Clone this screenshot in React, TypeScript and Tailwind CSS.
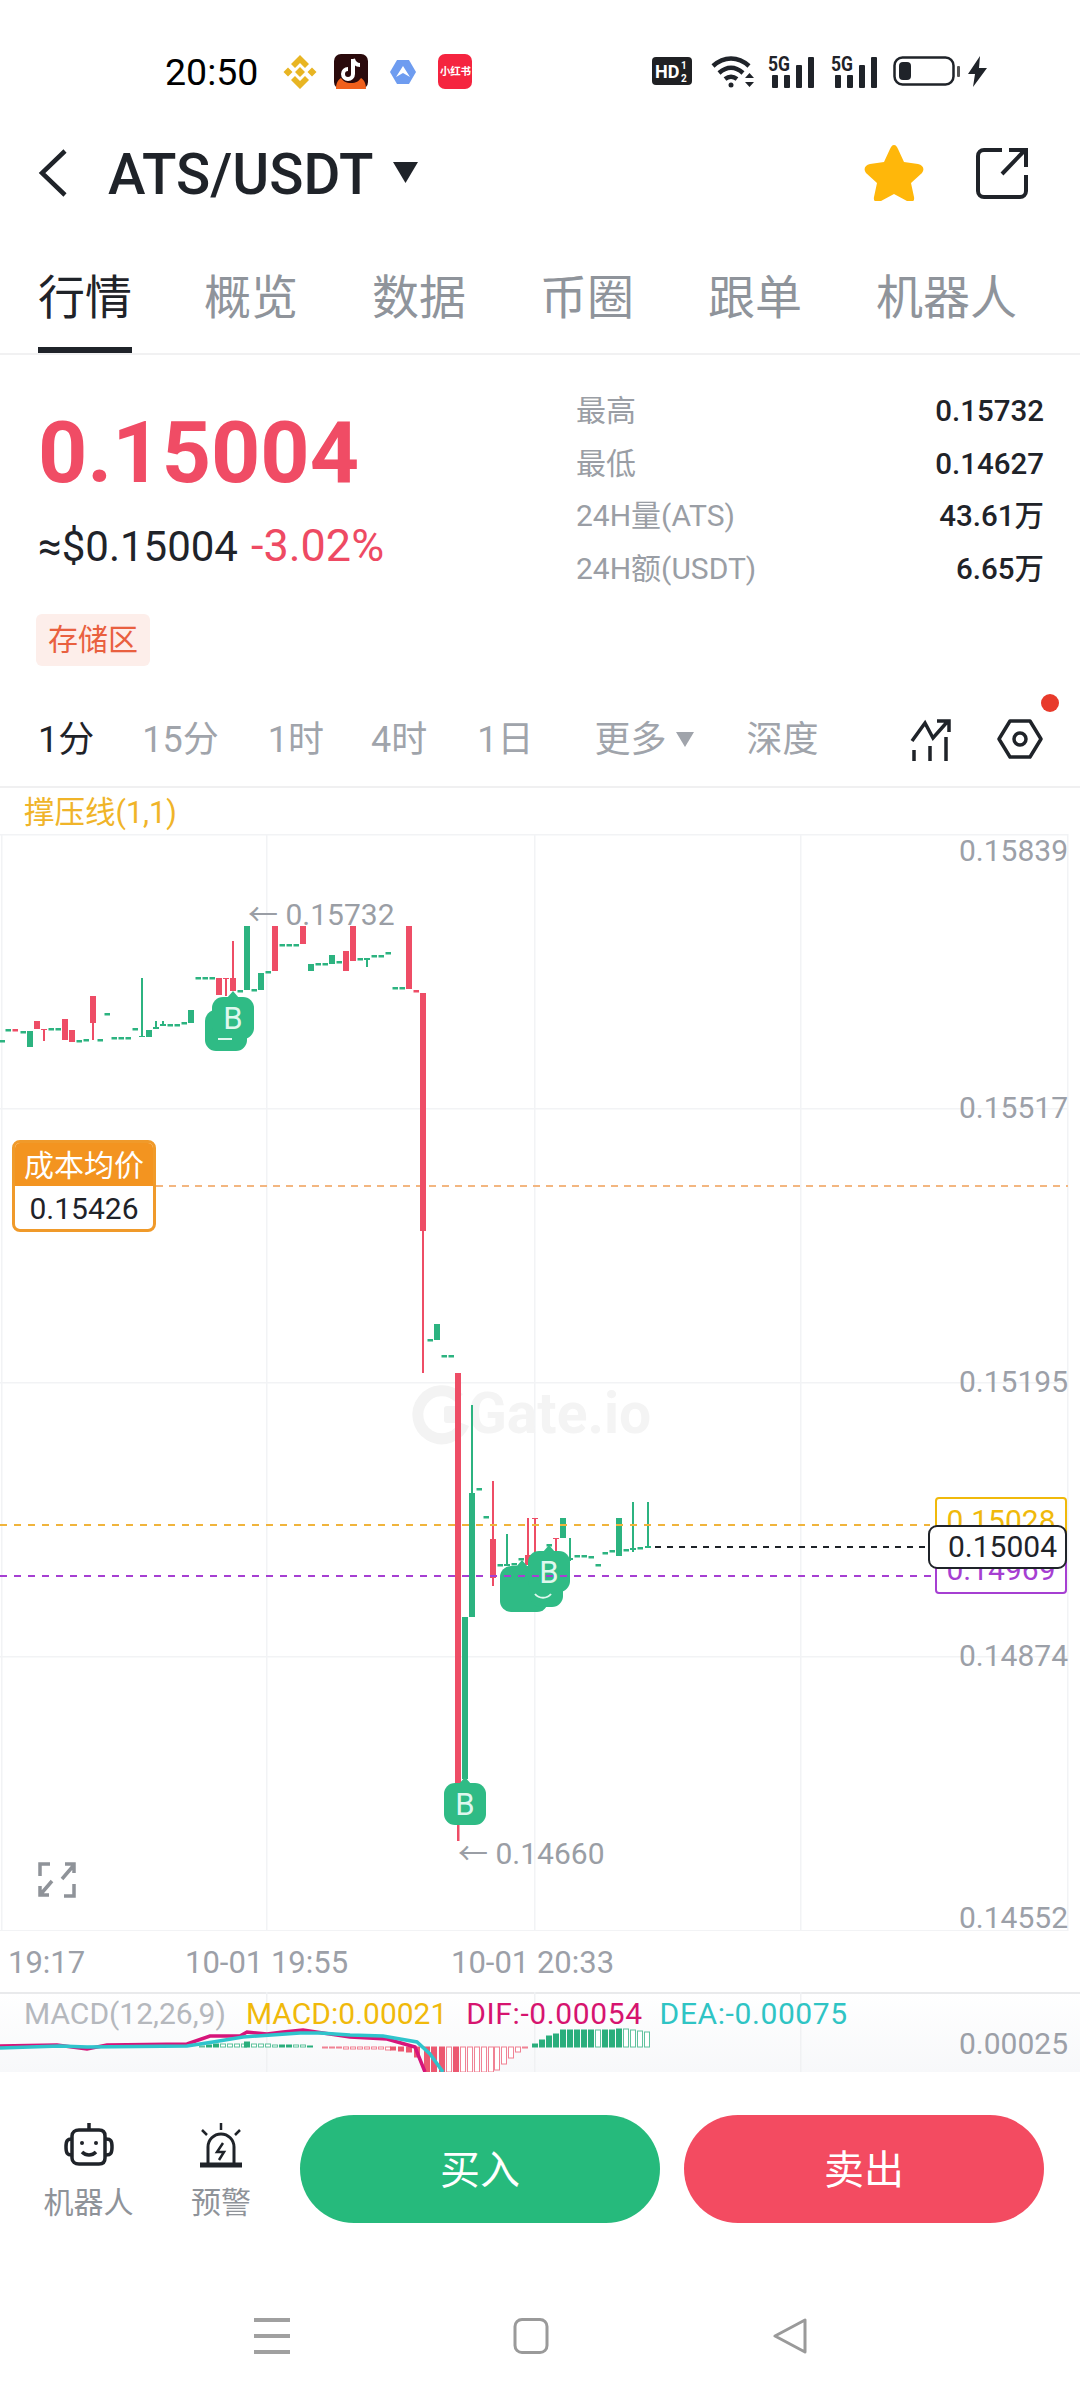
import React from 'react';

const GREEN = '#2cb380';
const RED = '#ee4d66';

// x, wickTop, wickBottom, bodyTop, bodyBottom, colour (page pixels)
type Candle = [number, number, number, number, number, string];
const candles: Candle[] = [
  [30, 1032, 1048, 1032, 1048, GREEN],
  [37, 1022, 1030, 1022, 1030, RED],
  [44, 1030, 1042, 1030, 1031, RED],
  [65, 1020, 1041, 1020, 1041, RED],
  [72, 1031, 1043, 1031, 1043, RED],
  [93, 997, 1041, 997, 1024, RED],
  [142, 979, 1038, 1037, 1038, GREEN],
  [149, 1031, 1038, 1031, 1038, GREEN],
  [156, 1022, 1028, 1028, 1030, GREEN],
  [163, 1022, 1026, 1025, 1027, GREEN],
  [191, 1011, 1024, 1011, 1024, GREEN],
  [219, 979, 996, 979, 996, RED],
  [226, 979, 997, 979, 980, RED],
  [233, 942, 992, 979, 992, RED],
  [247, 927, 990, 927, 991, GREEN],
  [261, 974, 991, 974, 991, GREEN],
  [275, 927, 972, 927, 972, RED],
  [303, 927, 945, 927, 945, RED],
  [311, 965, 972, 965, 972, GREEN],
  [332, 956, 965, 956, 965, GREEN],
  [346, 952, 972, 952, 972, RED],
  [353, 927, 962, 927, 962, RED],
  [367, 959, 968, 959, 961, GREEN],
  [409, 927, 990, 927, 990, RED],
  [423, 994, 1374, 994, 1232, RED],
  [437, 1325, 1341, 1325, 1341, GREEN],
  [458, 1374, 1842, 1374, 1800, RED],
  [465, 1618, 1780, 1618, 1780, GREEN],
  [472, 1406, 1618, 1494, 1618, GREEN],
  [493, 1482, 1587, 1540, 1579, RED],
  [507, 1535, 1566, 1565, 1567, GREEN],
  [528, 1519, 1566, 1556, 1566, RED],
  [535, 1519, 1555, 1519, 1520, RED],
  [556, 1539, 1560, 1539, 1540, RED],
  [563, 1519, 1539, 1519, 1539, GREEN],
  [570, 1539, 1562, 1559, 1561, GREEN],
  [619, 1519, 1557, 1519, 1557, GREEN],
  [633, 1503, 1553, 1549, 1551, GREEN],
  [648, 1503, 1549, 1547, 1549, GREEN],
];

// x, y, colour for flat candles
const dashes: [number, number, string][] = [
  [2, 1042, GREEN], [8, 1031, GREEN], [15, 1031, RED], [23, 1033, GREEN],
  [51, 1030, GREEN], [58, 1030, GREEN], [79, 1042, GREEN], [86, 1041, GREEN],
  [100, 1041, GREEN], [107, 1015, GREEN], [114, 1039, GREEN], [121, 1039, GREEN], [128, 1039, GREEN],
  [135, 1030, GREEN], [170, 1026, GREEN], [177, 1026, GREEN], [184, 1024, GREEN],
  [198, 979, GREEN], [205, 979, GREEN], [212, 979, GREEN], [240, 992, GREEN], [254, 991, GREEN], [268, 973, GREEN],
  [282, 946, GREEN], [289, 946, GREEN], [296, 946, GREEN], [318, 965, GREEN], [325, 965, GREEN],
  [339, 963, GREEN], [360, 960, GREEN], [374, 957, GREEN], [381, 957, GREEN], [388, 954, GREEN],
  [395, 989, GREEN], [402, 989, GREEN], [416, 992, RED], [430, 1341, GREEN], [444, 1357, GREEN], [451, 1357, GREEN],
  [479, 1490, GREEN], [486, 1518, GREEN], [500, 1566, GREEN], [514, 1565, GREEN], [521, 1560, GREEN], [549, 1546, GREEN],
  [577, 1557, GREEN], [584, 1557, GREEN], [591, 1558, GREEN], [598, 1566, GREEN], [605, 1554, GREEN], [612, 1552, GREEN],
  [626, 1551, GREEN], [640, 1549, GREEN],
];

function Marker({ x, y, w, h, tip, label }: { x: number; y: number; w: number; h: number; tip?: number; label?: boolean }) {
  return (
    <g>
      <rect x={x} y={y} width={w} height={h} rx={11} fill="#2fbb85" />
      {tip !== undefined && <path d={`M${tip - 6} ${y + 1}L${tip} ${y - 6}L${tip + 6} ${y + 1}Z`} fill="#2fbb85" />}
      {label && (
        <text x={x + w / 2} y={y + h / 2 + 11} textAnchor="middle" fontSize={31} fill="#dff7ee" fontFamily="Roboto">
          B
        </text>
      )}
    </g>
  );
}

function StatusIcons() {
  return (
    <div className="flex items-center">
      <svg className="ml-[25px]" width="34" height="34" viewBox="0 0 34 34" fill="#e8b523">
        <path d="M17 0l9 9-4 4-5-5-5 5-4-4zM17 34l9-9-4-4-5 5-5-5-4 4zM5 12.500l4.500 4.500L5 21.500.5 17zM29 12.500l4.500 4.500-4.500 4.500-4.500-4.500zM17 12l5 5-5 5-5-5z" />
      </svg>
      <svg className="ml-[17px]" width="34" height="35" viewBox="0 0 34 35">
        <rect width="34" height="35" rx="7" fill="#2a0a0c" />
        <path d="M2 35c0-6 2-9 5-11 2 3 5 5 10 5s8-2 10-5c3 2 5 5 5 11z" fill="#f0601c" />
        <path d="M19 5v15a5 5 0 1 1-5-5M19 5c1 4 4 6 7 6" fill="none" stroke="#fff" strokeWidth="4" />
      </svg>
      <svg className="ml-[22px]" width="26" height="24" viewBox="0 0 26 24">
        <path d="M7 0h12l7 12-7 12H7L0 12z" fill="#6e9cf0" />
        <path d="M13 6l7 11-7-4-7 4z" fill="#fff" />
      </svg>
      <div className="ml-[22px] w-[34px] h-[35px] rounded-[7px] bg-[#f5243f] text-white text-[10.500px] font-bold leading-[35px] text-center tracking-[-0.3px]">
        小红书
      </div>
    </div>
  );
}

function SignalIcon({ className }: { className?: string }) {
  return (
    <svg className={className} width="46" height="33" viewBox="0 0 46 33" fill="#1f2329" overflow="visible">
      <text x="0" y="16" fontSize="21" fontWeight="700" fontFamily="Roboto" textLength="22" lengthAdjust="spacingAndGlyphs">5G</text>
      <rect x="4" y="20" width="6" height="13" rx="1" />
      <rect x="16" y="20" width="6" height="13" rx="1" />
      <rect x="28" y="10" width="6" height="23" rx="1" />
      <rect x="40" y="2" width="6" height="31" rx="1" />
    </svg>
  );
}

function StatusRight() {
  return (
    <div className="flex items-center">
      <svg width="40" height="28" viewBox="0 0 40 28">
        <rect width="40" height="28" rx="4" fill="#1f2023" />
        <text x="3" y="21" fontSize="18" fontWeight="700" fill="#fff" fontFamily="Roboto">HD</text>
        <text x="29" y="12" fontSize="10" fontWeight="700" fill="#fff" fontFamily="Roboto">1</text>
        <text x="29" y="25" fontSize="10" fontWeight="700" fill="#fff" fontFamily="Roboto">2</text>
      </svg>
      <svg className="ml-[19px]" width="44" height="34" viewBox="0 0 44 34" fill="none" stroke="#1f2329" strokeWidth="4.500">
        <path d="M2 12c11-10 25-10 36 0M8 19c8-7 16-7 24 0M14 25c4-3 8-3 12 0" />
        <circle cx="20" cy="31" r="2.500" fill="#1f2329" stroke="none" />
        <path d="M34 24l4.500-5 4.500 5zM34 28h9l-4.500 5z" fill="#1f2329" stroke="none" />
      </svg>
      <SignalIcon className="ml-[13px]" />
      <SignalIcon className="ml-[17px]" />
      <svg className="ml-[16px]" width="67" height="30" viewBox="0 0 67 30">
        <rect x="1.500" y="1.500" width="59" height="27" rx="8" fill="none" stroke="#1f2329" strokeWidth="2.500" />
        <rect x="6" y="6" width="12" height="18" rx="4" fill="#1f2329" />
        <rect x="64" y="10" width="3" height="11" rx="1" fill="#555" />
      </svg>
      <svg className="ml-[8px]" width="19" height="31" viewBox="0 0 19 31" fill="#1f2329">
        <path d="M12 0L0 18h7l-2 13L19 12h-8z" />
      </svg>
    </div>
  );
}

function Stat({ label, value }: { label: string; value: string }) {
  return (
    <div className="flex justify-between items-center h-[52.500px]">
      <span className="text-[30px] text-[#9a9ea5]">{label}</span>
      <span className="text-[29.500px] font-medium text-[#1f2329]">{value}</span>
    </div>
  );
}

function PriceAxisLabel({ y, text }: { y: number; text: string }) {
  return (
    <span className="absolute right-[12px] text-[30px] leading-[34px] text-[#9ca0a8]" style={{ top: y - 835 - 17 }}>
      {text}
    </span>
  );
}

function PriceChart() {
  return (
    <div className="relative h-[1097px]">
      <svg className="absolute inset-0" width="1080" height="1097" viewBox="0 835 1080 1097">
        {[835, 1109, 1383, 1657, 1931].map((y) => (
          <rect key={y} x="0" y={y} width="1068" height="1.500" fill="#f2f3f5" />
        ))}
        {[1, 266, 534, 800, 1067].map((x) => (
          <rect key={x} x={x} y="835" width="1.500" height="1097" fill="#f2f3f5" />
        ))}
        {/* watermark */}
        <path d="M459 1399A24 24 0 1 0 464 1425" fill="none" stroke="#f3f3f3" strokeWidth="11" />
        <rect x="444" y="1407" width="17" height="17" rx="3" fill="#f3f3f3" />
        <text x="468" y="1434" fontSize="57" fontWeight="700" fill="#f4f4f4" fontFamily="Roboto">Gate.io</text>

        <path d="M156 1187H1068" stroke="#f3b680" strokeWidth="2" strokeDasharray="7 6" />

        {candles.map(([x, wt, wb, bt, bb, c], i) => (
          <g key={i} fill={c}>
            <rect x={x - 1} y={wt} width="2" height={wb - wt} />
            <rect x={x - 3} y={bt} width="6" height={bb - bt} />
          </g>
        ))}
        {dashes.map(([x, y, c], i) => (
          <rect key={i} x={x - 2.5} y={y - 1} width="5.500" height="2.500" fill={c} />
        ))}

        <Marker x={205} y={1011} w={42} h={41} />
        <Marker x={212} y={998} w={42} h={42} tip={233} label />
        <rect x="218" y="1039" width="14" height="2" fill="#dff7ee" />

        <Marker x={444} y={1784} w={42} h={42} tip={465} label />
        <rect x="457.500" y="1826" width="2" height="16" fill={RED} />

        <Marker x={500} y={1567} w={48} h={46} tip={522} />
        <Marker x={530} y={1577} w={33} h={31} />
        <path d="M535 1595c4 5 12 5 16 0" fill="none" stroke="#dff7ee" strokeWidth="2" />
        <Marker x={528} y={1552} w={42} h={41} tip={549} label />

        <path d="M0 1526H930" stroke="#f0b43c" strokeWidth="2" strokeDasharray="7 7" />
        <path d="M0 1577H936" stroke="#a63fd2" strokeWidth="2" strokeDasharray="7 7" />
        <path d="M655 1548H928" stroke="#1f2329" strokeWidth="2" strokeDasharray="6 6" />

        {/* fullscreen icon */}
        <path
          d="M40 1877v-12h10M74 1885v12h-10M62 1880L74 1866M65 1865h9v9M52 1882L40 1896M40 1887v9h9"
          fill="none"
          stroke="#8f9399"
          strokeWidth="3.500"
        />
      </svg>

      <PriceAxisLabel y={852} text="0.15839" />
      <PriceAxisLabel y={1109} text="0.15517" />
      <PriceAxisLabel y={1383} text="0.15195" />
      <PriceAxisLabel y={1657} text="0.14874" />
      <PriceAxisLabel y={1919} text="0.14552" />

      <span className="absolute left-[248px] top-[64px] text-[30px] leading-[34px] text-[#9a9ea5]">← 0.15732</span>
      <span className="absolute left-[458px] top-[1003px] text-[30px] leading-[34px] text-[#9a9ea5]">← 0.14660</span>

      <div className="absolute left-[12px] top-[306px] w-[144px] h-[92px] rounded-[8px] border-[3px] border-[#f09a2a] bg-white overflow-hidden text-center">
        <div className="h-[43px] bg-[#f39420] text-white text-[30px] leading-[45px]">成本均价</div>
        <div className="text-[#1f2329] text-[30px] leading-[45px]">0.15426</div>
      </div>

      <div className="absolute left-[935px] top-[663px] w-[132px] h-[42px] rounded-[4px] border-2 border-[#f0b90b] bg-white text-center text-[30px] leading-[44px] text-[#f0b90b]">
        0.15028
      </div>
      <div className="absolute left-[935px] top-[720px] w-[132px] h-[40px] rounded-[4px] border-2 border-[#a63fd2] bg-white text-center text-[30px] leading-[28px] text-[#a63fd2]">
        0.14969
      </div>
      <div className="absolute left-[928px] top-[691px] w-[139px] h-[44px] rounded-[9px] border-2 border-[#1f2329] bg-white text-right pr-[8px] text-[30px] leading-[40px] text-[#1f2329]">
        0.15004
      </div>
    </div>
  );
}

// histogram bars: x, depth from baseline (+ is up), hollow or filled
const macdBars: [number, number, boolean][] = [
  [202, 1, false], [209, 2, true], [216, 3, true], [223, 3, false], [230, 3, false], [237, 3, false], [244, 3, false],
  [247, 5, true], [254, 3, false], [261, 3, false], [268, 3, false], [275, 2, false], [282, 2, true], [289, 2, true],
  [296, 2, false], [303, 2, false], [310, 1, true],
  [325, -1, false], [332, -1, false], [339, -1, false], [346, -2, false], [353, -2, false], [360, -2, false],
  [367, -2, false], [374, -2, false], [381, -2, false], [388, -3, false], [393, -3, true], [401, -4, true],
  [409, -5, true], [417, -10, true], [427, -25, true], [434, -25, true], [442, -25, true], [449, -25, false],
  [456, -25, true], [463, -25, false], [470, -25, false], [477, -25, false], [484, -25, false], [491, -25, false],
  [497, -23, false], [504, -17, false], [511, -11, false], [518, -5, false], [525, -1, false],
  [535, 3, true], [542, 7, true], [549, 11, true], [556, 13, true], [563, 17, true], [570, 17, true], [577, 17, true],
  [584, 17, true], [591, 17, true], [598, 17, false], [605, 17, true], [612, 17, true], [619, 18, true],
  [626, 18, false], [633, 17, false], [640, 16, false], [647, 15, false],
];

function MacdChart() {
  return (
    <div className="relative h-[80px] bg-gradient-to-b from-white to-[#f7f8fa] overflow-hidden">
      <svg className="absolute inset-0" width="1080" height="80" viewBox="0 1993 1080 80">
        <rect x="0" y="1993" width="1080" height="2" fill="#e9eaec" />
        {[266, 534, 800].map((x) => (
          <rect key={x} x={x} y="1993" width="1.500" height="80" fill="#f0f1f3" />
        ))}
        {macdBars.map(([x, d, filled], i) => {
          const c = d > 0 ? '#2aae7c' : '#ec5870';
          const y = d > 0 ? 2048 - d : 2048;
          return (
            <rect
              key={i}
              x={x - 2.5}
              y={y}
              width="5"
              height={Math.abs(d)}
              fill={filled ? c : 'white'}
              stroke={c}
              strokeOpacity={filled ? 1 : 0.75}
              strokeWidth="1"
            />
          );
        })}
        <polyline
          fill="none"
          stroke="#d6147a"
          strokeWidth="3.500"
          points="0,2047 57,2046 87,2050 107,2046 187,2045 210,2037 240,2037 247,2033 267,2035 283,2033 303,2031 350,2038 387,2040 415,2048 425,2073"
        />
        <polyline
          fill="none"
          stroke="#2fc4cc"
          strokeWidth="3.500"
          points="0,2049 60,2047 87,2048 187,2047 213,2043 243,2038 300,2034 320,2034 350,2036 383,2037 417,2043 430,2055 443,2073"
        />
      </svg>
      <div className="absolute left-[24px] top-[5px] flex text-[30px] leading-[34px]">
        <span className="text-[#b5b8bd]">MACD(12,26,9)</span>
        <span className="ml-[20px] text-[#f0b90b]">MACD:0.00021</span>
        <span className="ml-[19px] text-[#d6146f] tracking-[0.6px]">DIF:-0.00054</span>
        <span className="ml-[17px] text-[#2fc4c4] tracking-[0.6px]">DEA:-0.00075</span>
      </div>
      <span className="absolute right-[12px] top-[35px] text-[30px] leading-[34px] text-[#9ca0a8]">0.00025</span>
    </div>
  );
}

export default function App() {
  const tabs = ['概览', '数据', '币圈', '跟单', '机器人'];
  const intervals = [
    { t: '15分', ml: 'ml-[48px]' },
    { t: '1时', ml: 'ml-[49px]' },
    { t: '4时', ml: 'ml-[47px]' },
    { t: '1日', ml: 'ml-[50px]' },
  ];

  return (
    <div className="w-[1080px] h-[2400px] bg-white flex flex-col font-['Roboto','Noto_Sans_CJK_SC',sans-serif] text-[#1f2329]">
      {/* status bar */}
      <div className="h-[110px] pt-[54px] pl-[165px] pr-[93px] flex items-start">
        <span className="text-[37.500px] leading-[36px] text-black">20:50</span>
        <StatusIcons />
        <div className="ml-auto">
          <StatusRight />
        </div>
      </div>

      {/* pair header */}
      <div className="h-[125px] pl-[38px] pr-[52px] flex items-center">
        <svg width="30" height="48" viewBox="0 0 30 48" fill="none" stroke="#1f2329" strokeWidth="4.500">
          <path d="M27 2L4 24l23 22" />
        </svg>
        <span className="ml-[40px] mt-[4px] text-[56.500px] leading-[60px] font-medium">ATS/USDT</span>
        <svg className="ml-[20px]" width="25" height="21" viewBox="0 0 25 21" fill="#1f2329">
          <path d="M0 0h25L12.500 21z" />
        </svg>
        <svg className="ml-auto" width="60" height="56" viewBox="0 0 60 56" fill="#ffb70a">
          <path d="M30 0c2 0 3 2 4 4l6 13 14 2c5 1 7 5 4 9L47 38l3 14c1 5-3 6-7 4l-13-7-13 7c-4 2-8 1-7-4l3-14L2 28c-3-4-1-8 4-9l14-2 6-13c1-2 2-4 4-4z" />
        </svg>
        <svg className="ml-[52px]" width="52" height="52" viewBox="0 0 52 52" fill="none" stroke="#1f2329" strokeWidth="4">
          <path d="M26 3H8a6 6 0 0 0-6 6v35a6 6 0 0 0 6 6h36a6 6 0 0 0 6-6V28" />
          <path d="M26 27L49 3M33 3h17v17" />
        </svg>
      </div>

      {/* tabs */}
      <div className="h-[120px] px-[38px] flex gap-[74px] border-b-2 border-[#f1f1f2] text-[47px] leading-[54px] text-[#8f949b]">
        <div className="relative -mr-[2px] pt-[36px] text-[#1f2329]">
          行情
          <div className="absolute left-0 right-0 bottom-0 h-[6px] bg-[#1f2329]" />
        </div>
        {tabs.map((t) => (
          <div key={t} className="pt-[36px]">
            {t}
          </div>
        ))}
      </div>

      {/* price block */}
      <div className="h-[331px] flex pl-[38px] pr-[36px] pt-[30px]">
        <div className="flex-1 mt-[18px]">
          <div className="text-[86px] leading-[100px] font-bold text-[#f04c65]">0.15004</div>
          <div className="mt-[21px] h-[44px] flex items-baseline gap-[13px] text-[42px] leading-[44px]">
            <span>≈$0.15004</span>
            <span className="text-[45px] text-[#ee4a63]">-3.02%</span>
          </div>
          <div className="mt-[46px] -ml-[2px] w-[114px] h-[52px] rounded-[6px] bg-[#fdeeea] text-[#e9603f] text-[30px] leading-[52px] text-center">
            存储区
          </div>
        </div>
        <div className="w-[468px] leading-[34px]">
          <Stat label="最高" value="0.15732" />
          <Stat label="最低" value="0.14627" />
          <Stat label="24H量(ATS)" value="43.61万" />
          <Stat label="24H额(USDT)" value="6.65万" />
        </div>
      </div>

      {/* intervals */}
      <div className="h-[102px] relative flex items-start pt-[33px] pl-[38px] pr-[37px] border-b-2 border-[#f0f0f1] text-[36px] leading-[42px] text-[#a0a4ab]">
        <span className="text-[#1f2329]">1分</span>
        {intervals.map((it) => (
          <span key={it.t} className={it.ml}>
            {it.t}
          </span>
        ))}
        <span className="ml-[61px]">更多</span>
        <svg className="ml-[10px] mt-[13px]" width="18" height="15" viewBox="0 0 18 15" fill="#a0a4ab">
          <path d="M0 0h18L9 15z" />
        </svg>
        <span className="ml-[52px]">深度</span>
        <svg className="ml-auto" width="42" height="42" viewBox="0 0 42 42" fill="none" stroke="#1f2329" strokeWidth="3.500">
          <path d="M2 22L15 4l8 15L38 2M27 2h12v11" />
          <path d="M4 31v11M20 27v15M36 18v24" />
        </svg>
        <svg className="ml-[45px]" width="46" height="40" viewBox="0 0 46 40" fill="none" stroke="#1f2329" strokeWidth="3.500">
          <path d="M13 2h20l11 18-11 18H13L2 20z" strokeLinejoin="round" />
          <circle cx="23" cy="20" r="6" />
        </svg>
        <div className="absolute right-[21px] top-[8px] w-[18px] h-[18px] rounded-full bg-[#e83a2b]" />
      </div>

      {/* indicator label */}
      <div className="h-[46px] pl-[24px] pt-[8px] text-[30.500px] leading-[34px] text-[#f0b429]">撑压线(1,1)</div>

      <PriceChart />

      {/* time axis */}
      <div className="h-[61px] relative text-[31px] leading-[64px] text-[#9ca0a8]">
        <span className="absolute left-[8px]">19:17</span>
        <span className="absolute left-[185px]">10-01 19:55</span>
        <span className="absolute left-[451px]">10-01 20:33</span>
      </div>

      <MacdChart />

      {/* actions */}
      <div className="h-[151px] pl-[38px] pr-[36px] pt-[43px] flex bg-white">
        <div className="w-[101px] pt-[8px] flex flex-col items-center text-[30px] leading-[34px] text-[#8f9399]">
          <svg width="50" height="46" viewBox="0 0 50 46" fill="none" stroke="#1f2329" strokeWidth="3.500">
            <path d="M25 0v6M15 7h20c4 0 6 2 6 6v22c0 4-2 6-6 6H15c-4 0-7-2-7-6V13c0-4 3-6 7-6z" />
            <path d="M8 16c-5 0-6 2-6 8s1 8 6 8M42 16c5 0 6 2 6 8s-1 8-6 8" />
            <circle cx="18" cy="20" r="2" fill="#1f2329" stroke="none" />
            <circle cx="32" cy="20" r="2" fill="#1f2329" stroke="none" />
            <path d="M18 29c4 4 10 4 14 0" />
          </svg>
          <span className="mt-[17px]">机器人</span>
        </div>
        <div className="ml-[52px] w-[60px] pt-[8px] flex flex-col items-center text-[30px] leading-[34px] text-[#8f9399]">
          <svg width="44" height="46" viewBox="0 0 44 46" fill="none" stroke="#1f2329" strokeWidth="3">
            <path d="M22 0v7M3 7l5 5M41 7l-5 5" strokeWidth="2.500" />
            <path d="M9 40V24a13 13 0 0 1 26 0v16" />
            <path d="M1 42h42" strokeWidth="5" />
            <path d="M24 20l-6 9h7l-5 8" strokeWidth="2.500" />
          </svg>
          <span className="mt-[17px]">预警</span>
        </div>
        <div className="ml-[49px] w-[360px] h-[108px] rounded-full bg-[#26ba7c] text-white text-[40px] leading-[112px] text-center">买入</div>
        <div className="ml-[24px] w-[360px] h-[108px] rounded-full bg-[#f34b61] text-white text-[40px] leading-[112px] text-center">卖出</div>
      </div>

      {/* system nav */}
      <div className="flex-1 flex items-start pt-[95px] pl-[254px] gap-[223px]">
        <svg width="36" height="36" viewBox="0 0 36 36" fill="#a0a0a0">
          <rect y="0" width="36" height="4" />
          <rect y="16" width="36" height="4" />
          <rect y="32" width="36" height="4" />
        </svg>
        <svg width="36" height="36" viewBox="0 0 36 36" fill="none" stroke="#9a9a9a" strokeWidth="3">
          <rect x="2" y="1.500" width="32" height="33" rx="7" />
        </svg>
        <svg width="36" height="36" viewBox="0 0 36 36" fill="none" stroke="#9a9a9a" strokeWidth="3" strokeLinejoin="round">
          <path d="M33 2v32L3 18z" />
        </svg>
      </div>
    </div>
  );
}
